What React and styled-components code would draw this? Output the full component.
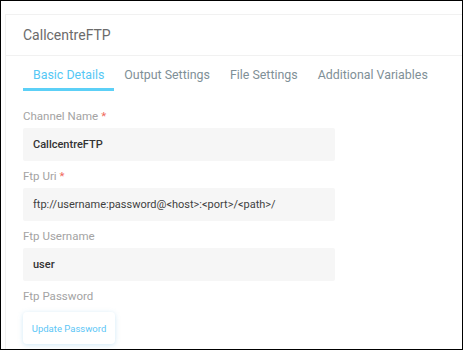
import React from "react";
import styled, { createGlobalStyle } from "styled-components";

const Global = createGlobalStyle`
  html, body { margin: 0; padding: 0; background: #fff; }
  body { font-family: Roboto, "Noto Sans", Arial, sans-serif; }
  * { box-sizing: border-box; }
`;

const Frame = styled.div`
  width: 463px;
  height: 350px;
  border: 1px solid #000;
  overflow: hidden;
  background: #fff;
  padding: 13px 0 0 4px;
`;

const Card = styled.div`
  width: 480px;
  border-top: 1px solid #f1f1f1;
  border-left: 1px solid #f1f1f1;
  min-height: 400px;
`;

const Header = styled.div`
  height: 41px;
  display: flex;
  align-items: center;
  padding-left: 17px;
  font-size: 14px;
  color: #6b6b6b;
  border-bottom: 1px solid #f1f1f1;
`;

const Tabs = styled.div`
  display: flex;
  padding-left: 17px;
  padding-top: 10px;
`;

const Tab = styled.div`
  padding: 0 10px;
  height: 25px;
  display: flex;
  align-items: flex-start;
  font-size: 12.4px;
  line-height: 17px;
  color: ${(p) => (p.$active ? "#55c8f5" : "#7f9097")};
  border-bottom: 3px solid ${(p) => (p.$active ? "#5cd0f7" : "transparent")};
`;

const Form = styled.div`
  padding: 18px 0 0 17px;
  display: flex;
  flex-direction: column;
`;

const Label = styled.div`
  font-size: 11.5px;
  line-height: 14px;
  color: #a3a3a3;
  margin-bottom: 5px;
`;

const Star = styled.span`
  color: #f0695c;
  margin-left: 3px;
`;

const Input = styled.div`
  width: 312px;
  height: 33px;
  background: #f6f6f6;
  border-radius: 2px;
  display: flex;
  align-items: center;
  padding-left: 10px;
  font-size: 11px;
  font-weight: ${(p) => (p.$light ? 400 : 500)};
  color: ${(p) => (p.$light ? "#3f3f3f" : "#333")};
  margin-bottom: 8px;
`;

const Button = styled.button`
  margin-top: 4px;
  width: 92px;
  height: 32px;
  border: none;
  background: #fff;
  border-radius: 4px;
  box-shadow: 0 1px 5px rgba(120, 190, 230, 0.35);
  color: #5cc6f6;
  font-family: Roboto, sans-serif;
  font-size: 9.5px;
  padding: 0;
  text-align: center;
`;

export default function App() {
  return (
    <>
      <Global />
      <Frame>
        <Card>
          <Header>CallcentreFTP</Header>
          <Tabs>
            <Tab $active>Basic Details</Tab>
            <Tab>Output Settings</Tab>
            <Tab>File Settings</Tab>
            <Tab>Additional Variables</Tab>
          </Tabs>
          <Form>
            <Label>
              Channel Name<Star>*</Star>
            </Label>
            <Input>CallcentreFTP</Input>
            <Label>
              Ftp Uri<Star>*</Star>
            </Label>
            <Input $light>ftp://username:password@&lt;host&gt;:&lt;port&gt;/&lt;path&gt;/</Input>
            <Label>Ftp Username</Label>
            <Input>user</Input>
            <Label>Ftp Password</Label>
            <div>
              <Button>Update Password</Button>
            </div>
          </Form>
        </Card>
      </Frame>
    </>
  );
}
